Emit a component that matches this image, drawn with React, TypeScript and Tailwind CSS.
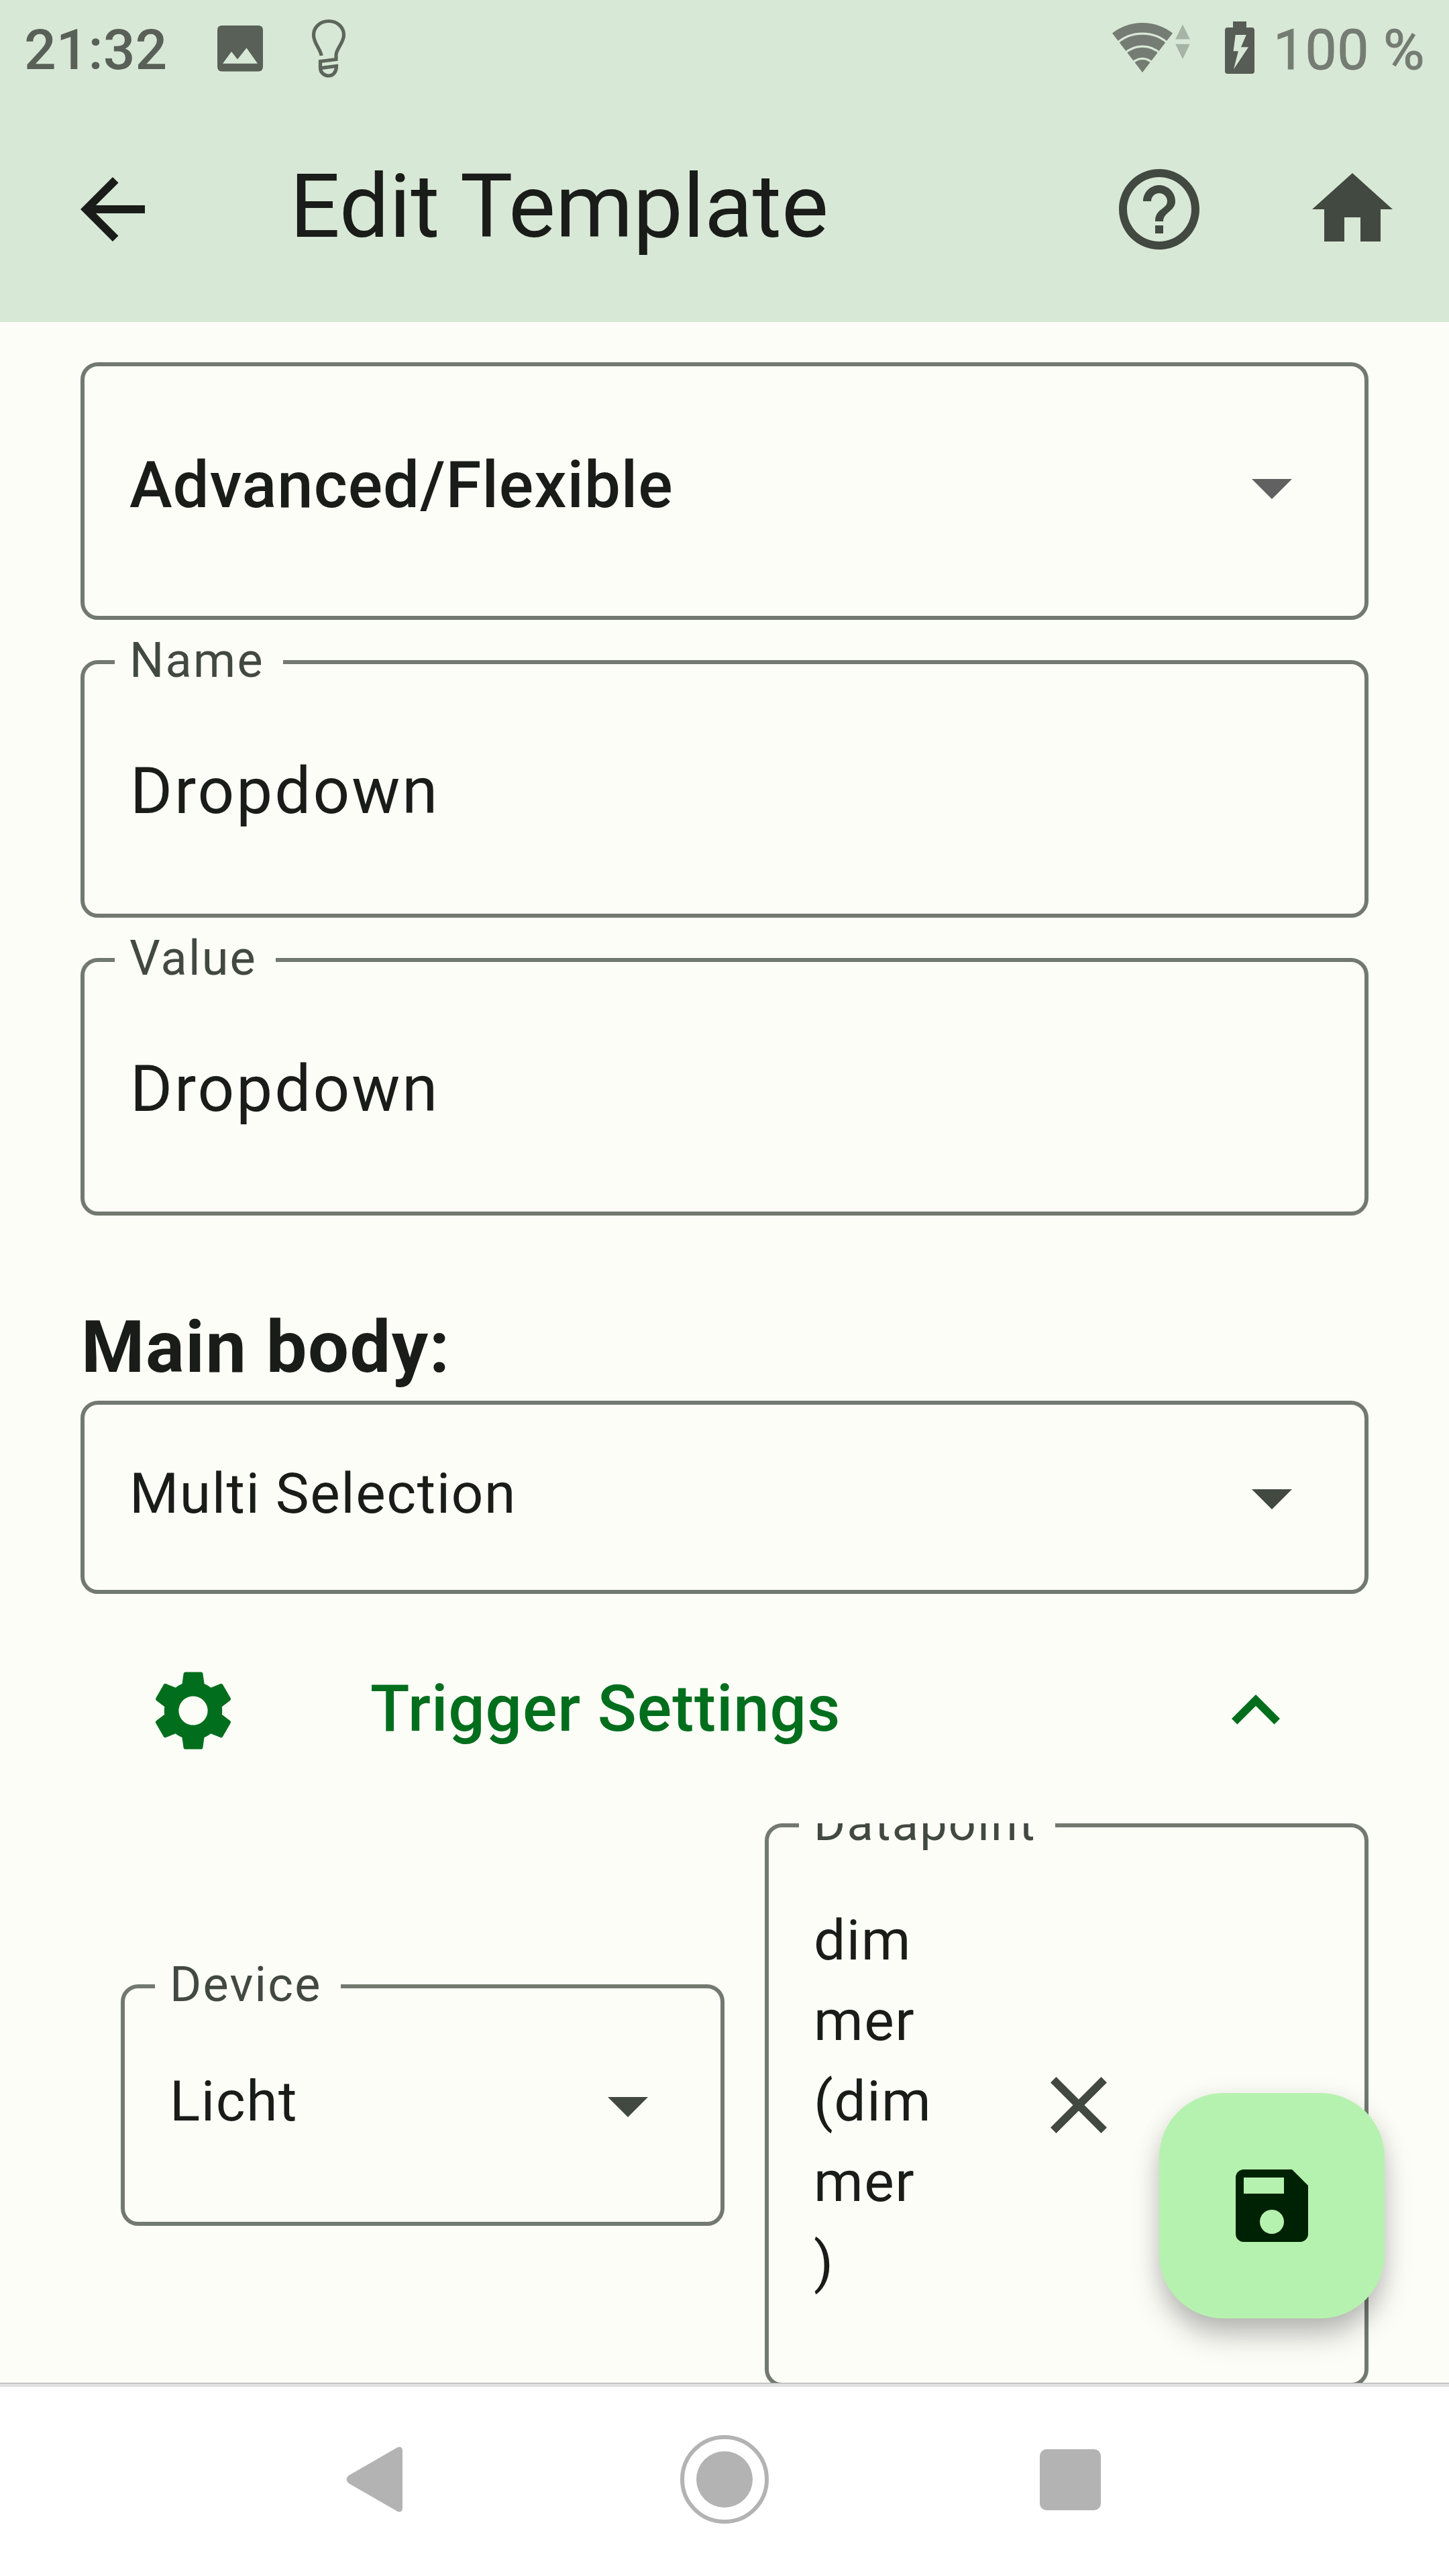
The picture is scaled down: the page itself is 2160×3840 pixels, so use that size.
import type { ReactNode } from "react";
import {
  MdArrowBack,
  MdArrowDropDown,
  MdClose,
  MdExpandLess,
  MdHelpOutline,
  MdHome,
  MdSave,
  MdSettings,
} from "react-icons/md";

function WifiIcon() {
  return (
    <svg className="h-[90px] w-[120px]" viewBox="1656 26 120 90">
      <path d="M1703 108 L1658 49.5 A73.5 73.5 0 0 1 1748 49.5 Z" fill="#757c73" />
      <g fill="none" stroke="#d8e8d6" strokeWidth="3.2">
        <circle cx="1703" cy="108" r="57.8" />
        <circle cx="1703" cy="108" r="38.8" />
        <circle cx="1703" cy="108" r="20.6" />
      </g>
      <path d="M1763 36.5 L1773.8 58.5 H1752.2 Z M1752.2 65.7 H1773.8 L1763 88 Z" fill="#a6b3a6" />
    </svg>
  );
}

function BatteryIcon() {
  return (
    <svg className="h-[90px] w-[48px]" viewBox="1824 26 48 90">
      <path
        fillRule="evenodd"
        fill="#575c54"
        d="M1838 32 H1858 V41 H1866 Q1870 41 1870 45 V106 Q1870 110 1866 110 H1830 Q1826 110 1826 106 V45 Q1826 41 1830 41 H1838 Z M1841.7 52 L1838.5 76.3 H1845.9 L1839 103.3 L1861 70.3 H1850 L1857.8 52 Z"
      />
    </svg>
  );
}

function PictureIcon() {
  return (
    <svg className="h-[90px] w-[72px]" viewBox="322 26 72 90">
      <path
        fillRule="evenodd"
        fill="#596058"
        d="M331 38 H385 Q392 38 392 45 V99 Q392 106.5 385 106.5 H331 Q324 106.5 324 99 V45 Q324 38 331 38 Z M332 94.7 H384 L367.5 71.5 L354 88.5 L345 77 Z"
      />
    </svg>
  );
}

function BulbIcon() {
  return (
    <svg className="h-[90px] w-[60px]" viewBox="460 26 60 90">
      <path
        fill="none"
        stroke="#5d665c"
        strokeWidth="5.2"
        d="M479 83 C478 73 467.500 65 467.500 52 C467.500 40 478 31.500 490 31.500 C502 31.500 512.500 40 512.500 52 C512.500 64 501 73 501 82 V88.500 L477.500 91.500 V102 C478 109 484 113 490 113 C497 113 501.500 107 501.500 98.500 L479 101.300"
      />
    </svg>
  );
}

function Field({ label, className, children }: { label?: string; className: string; children: ReactNode }) {
  return (
    <div className={`relative flex shrink-0 items-center rounded-[26px] border-6 border-[#727970] pl-[67px] ${className}`}>
      {label && (
        <span className="absolute -top-[41px] left-[45px] bg-[#fcfdf7] pr-[28px] pl-[22px] text-[72px] leading-[72px] tracking-[2.25px] text-[#424940]">
          {label}
        </span>
      )}
      {children}
    </div>
  );
}

export default function App() {
  return (
    <div className="flex h-[3840px] w-[2160px] flex-col overflow-hidden bg-[#fcfdf7] font-['Roboto',sans-serif] text-[#1a1c19]">
      <header className="h-[480px] shrink-0 bg-[#d8e8d6]">
        <div className="flex h-[150px] items-center px-9 text-[84px]">
          <span className="w-[286px] font-medium text-[#596058]">21:32</span>
          <div className="-mt-2 flex items-center gap-[66px]">
            <PictureIcon />
            <BulbIcon />
          </div>
          <div className="-mt-2 ml-auto flex items-center gap-12">
            <WifiIcon />
            <BatteryIcon />
          </div>
          <span className="w-[252px] text-right tracking-[0.4px] whitespace-nowrap text-[#757c73] [-webkit-text-stroke:1px_#757c73]">
            100 %
          </span>
        </div>
        <div className="flex items-start pt-[90px] pr-[72px] pl-24">
          <MdArrowBack className="size-36" />
          <h1 className="ml-48 text-[132px] leading-[137px] font-normal">Edit Template</h1>
          <MdHelpOutline className="ml-auto size-36 text-[#424940]" />
          <MdHome className="ml-36 size-36 text-[#424940]" />
        </div>
      </header>

      <main className="flex h-[3072px] shrink-0 flex-col overflow-hidden px-[120px] pt-[60px]">
        <div className="flex flex-col gap-[60px]">
          <Field className="h-96 justify-between pr-[66px]">
            <span className="pb-[18px] text-[96px] font-medium tracking-[0.96px]">Advanced/Flexible</span>
            <MdArrowDropDown className="-mt-3 size-36 text-[#616161]" />
          </Field>
          <Field label="Name" className="h-96">
            <span className="pt-[6px] pl-px text-[96px] tracking-[3px]">Dropdown</span>
          </Field>
          <Field label="Value" className="h-96">
            <span className="pt-[6px] pl-px text-[96px] tracking-[3px]">Dropdown</span>
          </Field>
        </div>

        <h2 className="h-[276px] shrink-0 pt-[116px] pl-px text-[108px] leading-[160px] font-bold tracking-[1.5px]">
          Main body:
        </h2>
        <Field className="h-72 justify-between pr-[66px]">
          <span className="pb-[10px] text-[84px] tracking-[1.5px]">Multi Selection</span>
          <MdArrowDropDown className="size-36 text-[#424940]" />
        </Field>

        <div className="flex h-[342px] shrink-0 items-start px-24 pt-[102px] text-[#006e1c]">
          <MdSettings className="size-36" />
          <span className="ml-48 text-[96px] leading-[138px] font-medium tracking-[0.9px]">Trigger Settings</span>
          <MdExpandLess className="ml-auto size-36" />
        </div>

        <div className="flex h-[840px] shrink-0 items-center gap-[60px] overflow-hidden pl-[60px]">
          <Field label="Device" className="h-[360px] w-[900px] justify-between pr-[66px]">
            <span className="pb-[10px] text-[84px] tracking-[1.5px]">Licht</span>
            <MdArrowDropDown className="size-36 text-[#424940]" />
          </Field>
          <Field label="Datapoint" className="h-[840px] w-[900px]">
            <p className="w-[323px] pb-[10px] text-[84px] leading-[120px] tracking-[1.5px]">
              dim
              <br />
              mer
              <br />
              (dim
              <br />
              mer
              <br />)
            </p>
            <MdClose className="size-36 text-[#424940]" />
          </Field>
        </div>
      </main>

      <button className="absolute top-[3120px] left-[1728px] flex size-[336px] items-center justify-center rounded-[96px] bg-[#b6f2af] text-[#002204] shadow-[0_28px_44px_-4px_rgba(0,0,0,0.26),0_4px_36px_rgba(0,0,0,0.08)]">
        <MdSave className="size-36" />
      </button>

      <nav className="relative flex h-72 shrink-0 flex-col bg-white">
        <div className="h-[6px] border-t border-[#a8a8a8] bg-[#e0e0e0]" />
        <div className="flex h-[276px] items-center pl-[516px] text-[#b3b3b3]">
          <svg className="h-[98px] w-[84px]" viewBox="0 0 84 98">
            <path d="M4 43 L77 1 Q84 -1 84 7 V91 Q84 99 77 97 L4 55 Q-3 49 4 43 Z" fill="currentColor" />
          </svg>
          <div className="ml-[414px] flex size-[132px] items-center justify-center rounded-full border-[6px] border-[#b3b3b3]">
            <div className="size-[84px] rounded-full bg-[#b3b3b3]" />
          </div>
          <div className="ml-[404px] size-[91px] rounded-[10px] bg-[#b3b3b3]" />
        </div>
      </nav>
    </div>
  );
}
